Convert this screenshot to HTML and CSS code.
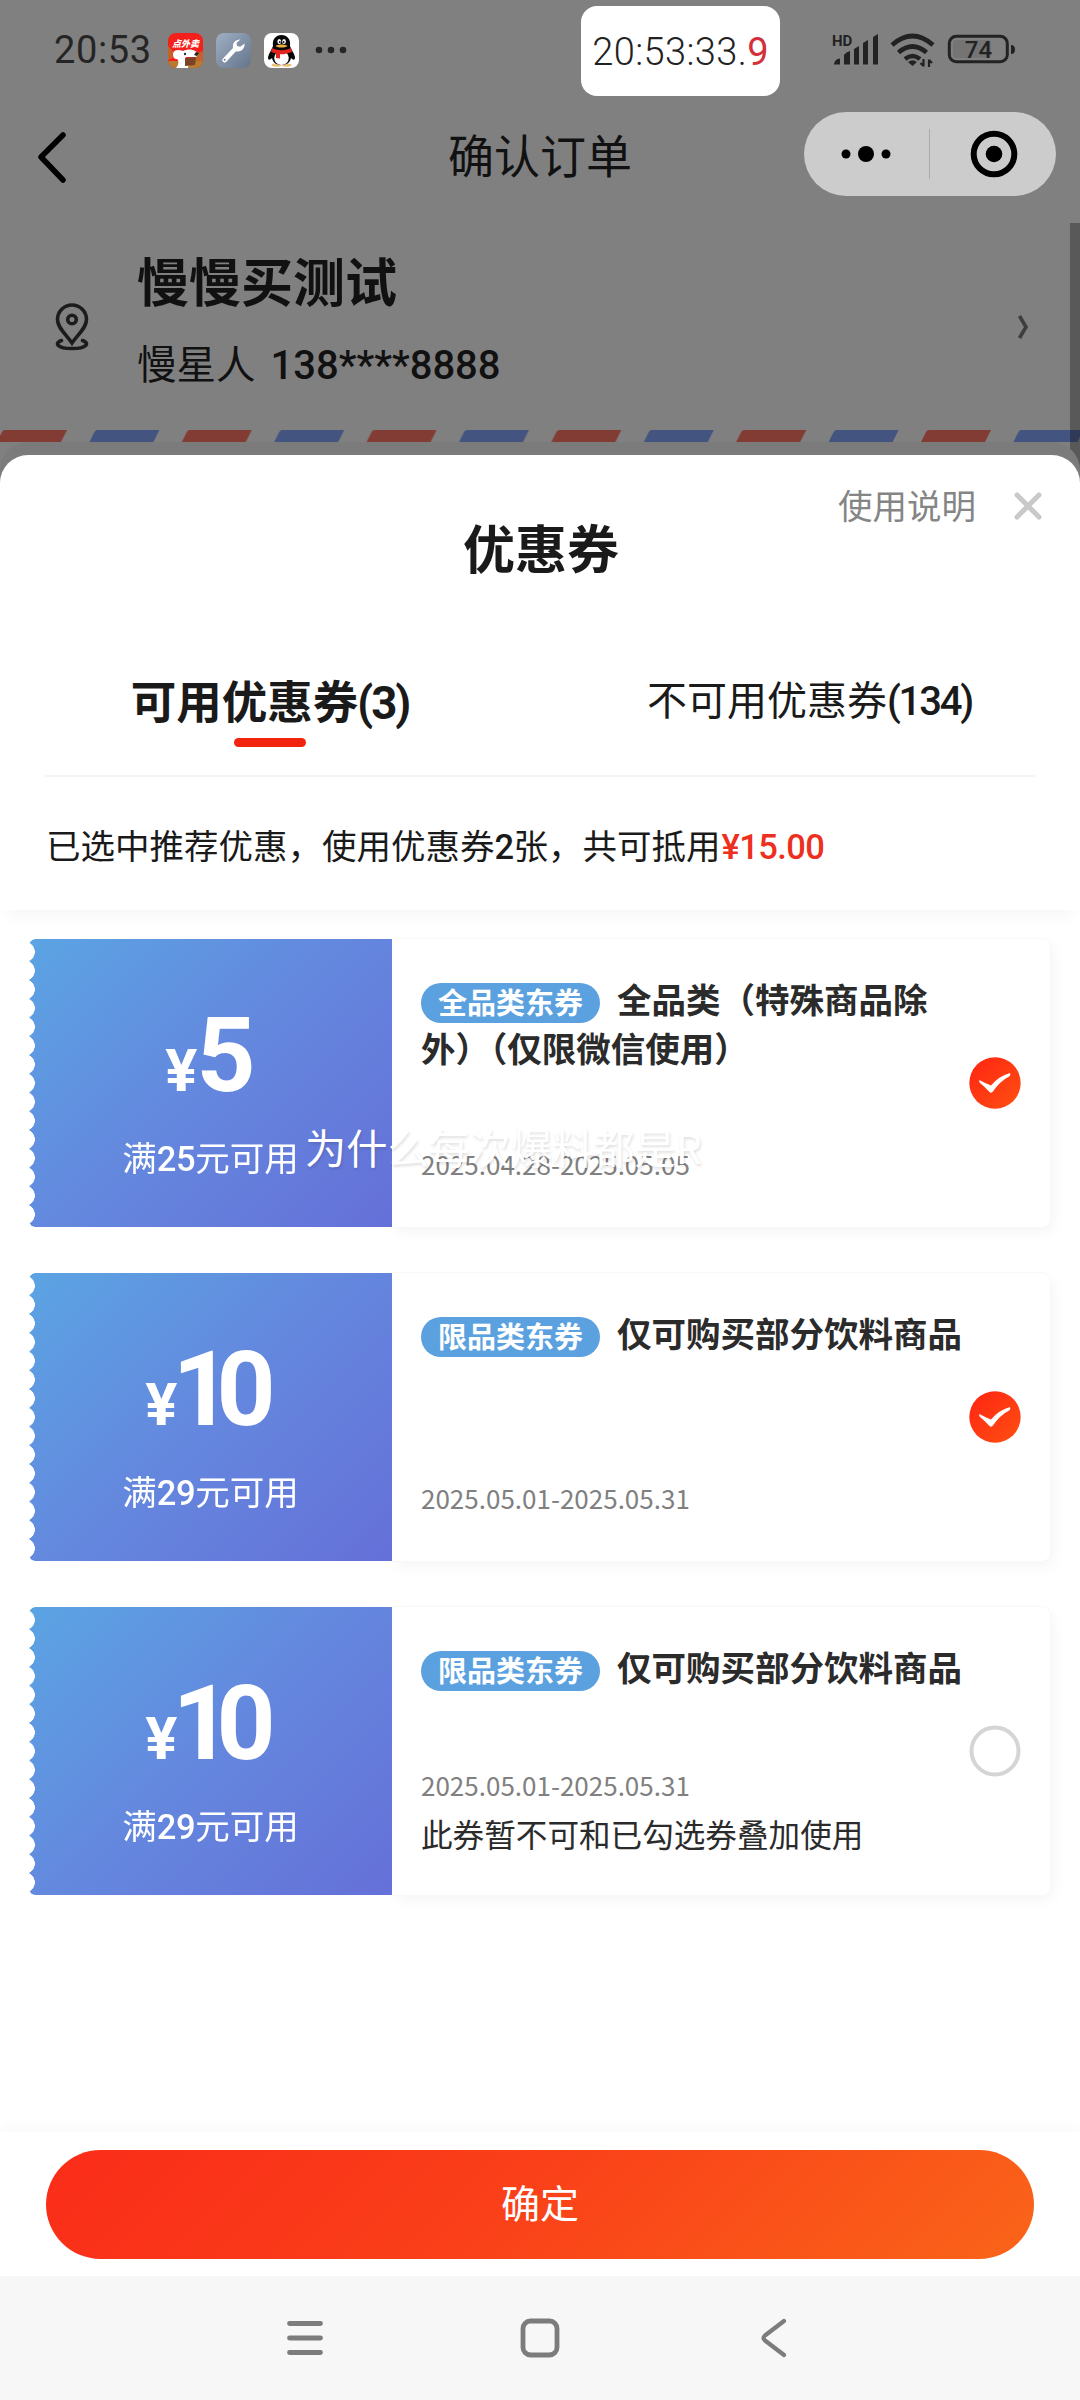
FILE: index.html
```html
<!DOCTYPE html>
<html lang="zh-CN">
<head>
<meta charset="utf-8">
<title>确认订单</title>
<link rel="stylesheet" href="styles.css">
</head>
<body>
<div class="screen">
  <header class="status">
    <span class="clock">20:53</span>
    <div class="apps">
      <svg width="35" height="35" viewBox="0 0 35 35"><defs><clipPath id="app"><rect width="35" height="35" rx="8"/></clipPath></defs>
        <g clip-path="url(#app)"><rect width="35" height="35" fill="#f5201c"/>
        <path d="M0 13l5 5v7l-5 2zM27 21l8-3v17H22z" fill="#c5622c"/>
        <path d="M0 28h35v7H0z" fill="#b87a30"/>
        <path d="M5 21c0-4 5-5 10-3 4-2 9-2 12 0 3 1 4 4 1 6l-10 0-1 2c3 1 4 5 3 9H8c3-3 3-7 1-9-3 0-4-2-4-5z" fill="#fff"/>
        <path d="M17 25l11-1-1 8-10 1z" fill="#7a4325"/><circle cx="17" cy="21" r="1.200" fill="#234"/><path d="M28 19l3 1-2 3-3-1z" fill="#222"/></g>
        <text class="app-label" x="17.500" y="13.500" text-anchor="middle">点外卖</text>
      </svg>
      <svg width="35" height="35" viewBox="0 0 35 35"><defs><linearGradient id="tool" x1="0" y1="0" x2="1" y2="1"><stop offset="0" stop-color="#9fb0c5"/><stop offset="1" stop-color="#64748a"/></linearGradient></defs>
        <rect width="35" height="35" rx="8" fill="url(#tool)"/>
        <path d="M24.500 6.500a7 7 0 0 0-7.500 8.500L7 25.500a2.300 2.300 0 0 0 3.300 3.300L20 18.300a7 7 0 0 0 8.500-7.800l-4.300 3.200-3.200-.7-.5-3.200z" fill="#fff"/><circle cx="8.700" cy="26.800" r="1" fill="#71849a"/>
      </svg>
      <svg width="35" height="35" viewBox="0 0 35 35"><rect width="35" height="35" rx="8" fill="#fff"/>
        <ellipse cx="12.500" cy="32" rx="5" ry="1.800" fill="#e9c27a"/><ellipse cx="22.500" cy="32" rx="5" ry="1.800" fill="#e9c27a"/>
        <path d="M9 13C8 6 12 2 17.500 2S27 6 26 13c1 3 4 7 5 11 0 4-2 3-4 1-1 5-5 7-9.500 7S9 30 8 25c-2 2-4 3-4-1 1-4 4-8 5-11z" fill="#070707"/>
        <ellipse cx="17.500" cy="25" rx="7.300" ry="7" fill="#fff"/>
        <path d="M8 15c6 3 13 3 19 0l1 4c-6 2-9 2.500-12 2.200v4.300l-4-.5v-4.500L7 19z" fill="#e2231f"/>
        <ellipse cx="15.300" cy="8.500" rx="1.900" ry="2.600" fill="#fff"/><ellipse cx="20" cy="8.500" rx="1.900" ry="2.600" fill="#fff"/><circle cx="15.800" cy="9" r=".9"/><circle cx="19.600" cy="9" r=".9"/>
        <path d="M11.500 13c3-2 9-2 12 0-3 2-9 2-12 0z" fill="#f0b040"/>
      </svg>
      <svg class="more" width="32" height="8" viewBox="0 0 32 8"><g fill="#252525"><circle cx="4" cy="4" r="3.300"/><circle cx="16" cy="4" r="3.300"/><circle cx="28" cy="4" r="3.300"/></g></svg>
    </div>
    <div class="timer">20:53:33.<b>9</b></div>
    <svg class="radios" width="184" height="36" viewBox="0 0 184 36" fill="#222">
      <text class="hd" x="0" y="13.500">HD</text>
      <path d="M2 32.500a6 6 0 0 1 6-6v6zM12 23q2-3 6-4v13.500h-6zM22 17l5-3v18.500h-5zM31 11l5-3v24.500h-5zM41 5l5-3v30.500h-5z"/>
      <g fill="none" stroke="#222" stroke-width="4.600"><path d="M60 13q20.500-18 41 0M66.500 20.500q14-12 28 0M73 27q7.500-6 15 0"/></g>
      <path d="M76 30q4.500-3.500 9 0l-4.500 4z"/><path d="M91.500 27v7.500M91.500 34l-3-3M97 35v-7.500M97 28l3 3" fill="none" stroke="#222" stroke-width="2.200"/>
      <rect x="117.300" y="4.300" width="58" height="25.400" rx="7" fill="none" stroke="#222" stroke-width="3"/>
      <rect x="121" y="8" width="38" height="18" rx="3" fill="#747474"/>
      <path d="M179 13q4 0 4 4.500t-4 4.500z"/><text class="level" x="146.500" y="25.500" text-anchor="middle">74</text>
    </svg>
  </header>

  <nav class="nav">
    <svg width="32" height="54" viewBox="0 0 32 54"><path d="M27 5L5 27l22 23" fill="none" stroke="#000" stroke-width="5.500" stroke-linecap="round" stroke-linejoin="round"/></svg>
    <h1>确认订单</h1>
    <div class="capsule">
      <svg width="50" height="18" viewBox="0 0 50 18"><circle cx="5" cy="9" r="4.500"/><circle cx="25" cy="9" r="8"/><circle cx="45" cy="9" r="4.500"/></svg>
      <i></i>
      <svg width="48" height="48" viewBox="0 0 48 48"><circle cx="24" cy="24" r="20.300" fill="none" stroke="#000" stroke-width="6"/><circle cx="24" cy="24" r="8.300"/></svg>
    </div>
  </nav>

  <section class="address">
    <svg width="36" height="48" viewBox="0 0 36 48" fill="none" stroke="#1c1c1c" stroke-width="3.600" stroke-linecap="round"><path d="M18 40C12 31 3.500 25 3.500 16.500a14.500 14.500 0 0 1 29 0C32.500 25 24 31 18 40z"/><circle cx="18" cy="16.500" r="4.300"/><path d="M7.500 37.500C0 40 3 45.500 18 45.500s18-5.500 10.500-8"/></svg>
    <div class="who">
      <h2>慢慢买测试</h2>
      <p>慢星人<span class="num">138****8888</span></p>
    </div>
    <svg class="go" width="14" height="28" viewBox="0 0 14 28"><path d="M3.500 3l6.500 11-6.500 11" fill="none" stroke="#3e3e3e" stroke-width="3.600"/></svg>
  </section>
  <svg class="airmail" width="1080" height="12" viewBox="0 0 1080 12">
    <defs><pattern id="stripes" width="184.800" height="12" patternUnits="userSpaceOnUse" patternTransform="translate(-3 0)"><path d="M0 12l5-10q1-2 3-2h62l-6 12z" fill="#823c34"/><path d="M92.400 12l5-10q1-2 3-2h62l-6 12z" fill="#42547f"/></pattern></defs>
    <rect width="1080" height="12" fill="url(#stripes)"/>
  </svg>
  <div class="scrollbar"></div>

  <main class="sheet">
    <div class="sheet-head">
      <div class="help"><span>使用说明</span>
        <svg width="32" height="32" viewBox="0 0 32 32"><path d="M5 5l22 22M27 5L5 27" stroke="#c9c9c9" stroke-width="5" stroke-linecap="round"/></svg>
      </div>
      <h2>优惠券</h2>
    </div>
    <div class="tabs">
      <div class="tab active">可用优惠券<span class="num">(3)</span></div>
      <div class="tab">不可用优惠券<span class="num">(134)</span></div>
    </div>
    <p class="summary">已选中推荐优惠，使用优惠券<span class="num">2</span>张，共可抵用<span class="num red">¥15.00</span></p>

    <div class="list">
      <article class="ticket">
        <div class="worth"><div class="amount"><small>¥</small>5</div><div class="cond">满<span class="num">25</span>元可用</div></div>
        <div class="info">
          <h3><span class="pill">全品类东券</span>全品类（特殊商品除<br>外）（仅限微信使用）</h3>
          <time>2025.04.28-2025.05.05</time>
        </div>
        <svg class="mark" width="52" height="52" viewBox="0 0 52 52"><defs><linearGradient id="hot" x1="0" y1="0" x2="1" y2="1"><stop offset="0" stop-color="#ff2412"/><stop offset="1" stop-color="#ff5012"/></linearGradient></defs><circle cx="26" cy="26" r="25.700" fill="url(#hot)"/><path d="M10.500 23q5 3 11.500 5.500Q30 19 41 16q1 2-.5 3.200Q31 24 23.500 35q-1.500 1.500-3 0-4.500-5-9.500-9-1.500-1.500-.5-3z" fill="#fff"/></svg>
        <div class="barrage">为什么每次爆料都是R</div>
      </article>
      <article class="ticket">
        <div class="worth"><div class="amount ten"><small>¥</small>10</div><div class="cond">满<span class="num">29</span>元可用</div></div>
        <div class="info">
          <h3><span class="pill">限品类东券</span>仅可购买部分饮料商品</h3>
          <time>2025.05.01-2025.05.31</time>
        </div>
        <svg class="mark" width="52" height="52" viewBox="0 0 52 52"><circle cx="26" cy="26" r="25.700" fill="url(#hot)"/><path d="M10.500 23q5 3 11.500 5.500Q30 19 41 16q1 2-.5 3.200Q31 24 23.500 35q-1.500 1.500-3 0-4.500-5-9.500-9-1.500-1.500-.5-3z" fill="#fff"/></svg>
      </article>
      <article class="ticket">
        <div class="worth"><div class="amount ten"><small>¥</small>10</div><div class="cond">满<span class="num">29</span>元可用</div></div>
        <div class="info">
          <h3><span class="pill">限品类东券</span>仅可购买部分饮料商品</h3>
          <time>2025.05.01-2025.05.31</time>
          <p class="note">此券暂不可和已勾选券叠加使用</p>
        </div>
        <svg class="mark" width="52" height="52" viewBox="0 0 52 52"><circle cx="26" cy="26" r="23.500" fill="#fff" stroke="#d5d5d5" stroke-width="4"/></svg>
      </article>
    </div>

    <footer class="confirm"><button>确定</button></footer>
  </main>

  <div class="sysbar">
    <svg width="38" height="40" viewBox="0 0 38 40"><path d="M3.500 5.500h31M3.500 20h31M3.500 34.500h31" stroke="#7c7c7c" stroke-width="4.800" stroke-linecap="round"/></svg>
    <svg width="40" height="40" viewBox="0 0 40 40"><rect x="3" y="3" width="34" height="34" rx="7.500" fill="none" stroke="#7c7c7c" stroke-width="4.800"/></svg>
    <svg width="30" height="40" viewBox="0 0 30 40"><path d="M25 3L6 17.500q-3 2.500 0 5L25 37" fill="none" stroke="#7c7c7c" stroke-width="4.200" stroke-linecap="round"/></svg>
  </div>
</div>
</body>
</html>
```
FILE: styles.css
```css
* { box-sizing: border-box; margin: 0; padding: 0; }
body { background: #808080; font-family: "Noto Sans CJK SC", sans-serif; color: #1a1a1a; }
svg { display: block; flex: none; }
.screen { position: relative; width: 1080px; height: 2400px; display: flex; flex-direction: column; overflow: hidden; background: #808080; }
.num { font-family: Roboto, sans-serif; font-weight: 500; line-height: 1; }

/* status bar */
.status { height: 100px; display: flex; align-items: center; padding: 0 64px 0 54px; font-family: Roboto, sans-serif; color: #252525; }
.clock { font-size: 38px; line-height: 40px; width: 115px; letter-spacing: .6px; }
.apps { display: flex; align-items: center; gap: 13px; }
.apps .more { margin-left: 3px; }
.app-label { font: italic 900 9px "Noto Sans CJK SC", sans-serif; fill: #fff; }
.timer { margin: 2px 0 0 234px; width: 200px; height: 90px; border-radius: 16px; background: #fff; font-size: 38px; font-weight: 300; line-height: 92px; text-align: center; white-space: nowrap; color: #222; letter-spacing: .4px; }
.timer b { font-weight: 400; color: #d3303b; }
.radios { margin-left: 52px; }
.hd { font: 700 15px Roboto, sans-serif; }
.level { font: 500 24px Roboto, sans-serif; }

/* mini-program title bar */
.nav { height: 110px; display: grid; grid-template-columns: 1fr auto 1fr; align-items: center; padding: 0 24px 0 36px; margin-top: 2px; }
.nav h1 { font-size: 46px; font-weight: 400; line-height: 60px; color: #111; margin: -8px 0 0 -12px; }
.capsule { justify-self: end; width: 252px; height: 84px; margin-top: -6px; border-radius: 42px; background: #ccc; display: flex; align-items: center; justify-content: space-between; padding: 0 38px 0 37px; }
.capsule i { width: 1px; height: 50px; background: #aaa; margin-right: 3px; }

/* delivery address */
.address { height: 218px; display: flex; align-items: center; padding: 11px 50px 0 54px; color: #111; }
.who { flex: 1; margin-left: 47px; margin-top: -19px; }
.who h2 { font-size: 52px; font-weight: 700; line-height: 76px; }
.who p { font-size: 39.500px; line-height: 60px; margin-top: 14px; font-weight: 400; }
.who .num { font-size: 40px; margin-left: 15px; letter-spacing: 0; }
.scrollbar { position: absolute; right: 0; top: 223px; width: 10px; height: 270px; background: rgba(0, 0, 0, .3); }

/* coupon sheet */
.sheet { position: relative; margin-top: 13px; height: 1821px; border-radius: 28px 28px 0 0; background: #fff; display: flex; flex-direction: column; box-shadow: 0 -13px 0 #7b7b7b; }
.sheet-head { height: 182px; padding: 24px 36px 0; }
.help { display: flex; justify-content: flex-end; align-items: center; gap: 36px; height: 54px; font-size: 34.500px; color: #858585; }
.help span { margin-top: -5px; }
.sheet-head h2 { font-size: 52px; line-height: 76px; text-align: center; margin: -24px 0 0 2px; }
.tabs { margin: 0 45px; height: 140px; display: grid; grid-template-columns: 450px 1fr; border-bottom: 2px solid #f4f4f4; }
.tab { text-align: center; font-size: 40px; line-height: 122px; color: #1a1a1a; padding-left: 89px; }
.tab .num { letter-spacing: -2.200px; }
.tab.active { position: relative; font-size: 45.500px; font-weight: 700; line-height: 124px; padding-left: 0; }
.tab.active .num { font-weight: 700; margin-left: -1px; letter-spacing: -2px; }
.tab.active::after { content: ""; position: absolute; left: 189px; top: 101px; width: 72px; height: 9px; border-radius: 5px; background: #f2230f; }
.summary { height: 133px; padding: 0 46px; font-size: 34.500px; line-height: 134px; box-shadow: 0 14px 14px -8px rgba(0, 0, 0, .04); white-space: nowrap; }
.summary .num { letter-spacing: -.6px; }
.summary .red { color: #ee2f20; margin-left: 1px; }
.list { padding: 29px 30px 0 29px; display: flex; flex-direction: column; gap: 46px; }

.ticket { position: relative; height: 288px; display: flex; border-radius: 8px; }
.ticket::before { content: ""; position: absolute; left: 363px; right: 0; top: 0; bottom: 0; border-radius: 0 8px 8px 0; box-shadow: 0 0 0 1px #f8f8f8, 4px 6px 14px rgba(0, 0, 0, .04); }
.worth { width: 363px; height: 288px; border-radius: 6px 0 0 6px; background: linear-gradient(135deg, #5ba4e3, #6487de 50%, #6570d8); color: #fff; text-align: center; -webkit-mask: radial-gradient(circle 10.400px at -4.400px 9.400px, transparent 96%, #000) 0 3.500px / 100% 18.750px repeat-y; mask: radial-gradient(circle 10.400px at -4.400px 9.400px, transparent 96%, #000) 0 3.500px / 100% 18.750px repeat-y; }
.amount { font: 700 103px/120px Roboto, sans-serif; margin-top: 57px; }
.amount small { font-size: 60px; letter-spacing: -1px; }
.amount.ten { letter-spacing: -15px; padding-right: 15px; }
.amount.ten small { letter-spacing: -5px; }
.cond { font-size: 34.500px; line-height: 52px; margin-top: -1px; }
.cond .num { letter-spacing: -.4px; }
.info { position: relative; flex: 1; padding: 35px 0 0 29px; display: flex; flex-direction: column; }
.info h3 { font-size: 34.500px; font-weight: 700; line-height: 49px; color: #2b2b2b; white-space: nowrap; }
.pill { display: inline-block; width: 179px; height: 40px; border-radius: 20px; background: #5ba1e0; color: #fff; font-size: 29px; line-height: 37px; text-align: center; vertical-align: -1px; margin-right: 17px; }
time { font-size: 26px; line-height: 36px; color: #808080; margin-top: auto; margin-bottom: 45px; }
.note { font-size: 31.600px; line-height: 46px; color: #2b2b2b; margin-bottom: 39px; }
time:not(:last-child) { margin-bottom: 7px; }
.mark { position: relative; margin: 118px 29px 0 0; }
.barrage { position: absolute; left: 276px; top: 177px; font-size: 41.200px; line-height: 60px; color: #fff; text-shadow: 1px 2px 3px rgba(0, 0, 0, .13); white-space: nowrap; }

.confirm { margin-top: auto; height: 144px; padding: 18px 46px; background: #fff; box-shadow: 0 -6px 12px rgba(0, 0, 0, .025); }
.confirm button { display: block; width: 988px; height: 109px; border: 0; border-radius: 55px; background: linear-gradient(135deg, #fa2c19, #fa3f19 45%, #fa6419); color: #fff; font: 400 39px/100px "Noto Sans CJK SC", sans-serif; padding-bottom: 7px; }

/* system navigation */
.sysbar { height: 124px; background: #f7f7f7; display: flex; justify-content: center; gap: 196px; align-items: center; padding-right: 8px; }
.sysbar svg:last-child { margin: 0 -3px 0 3px; }
```
